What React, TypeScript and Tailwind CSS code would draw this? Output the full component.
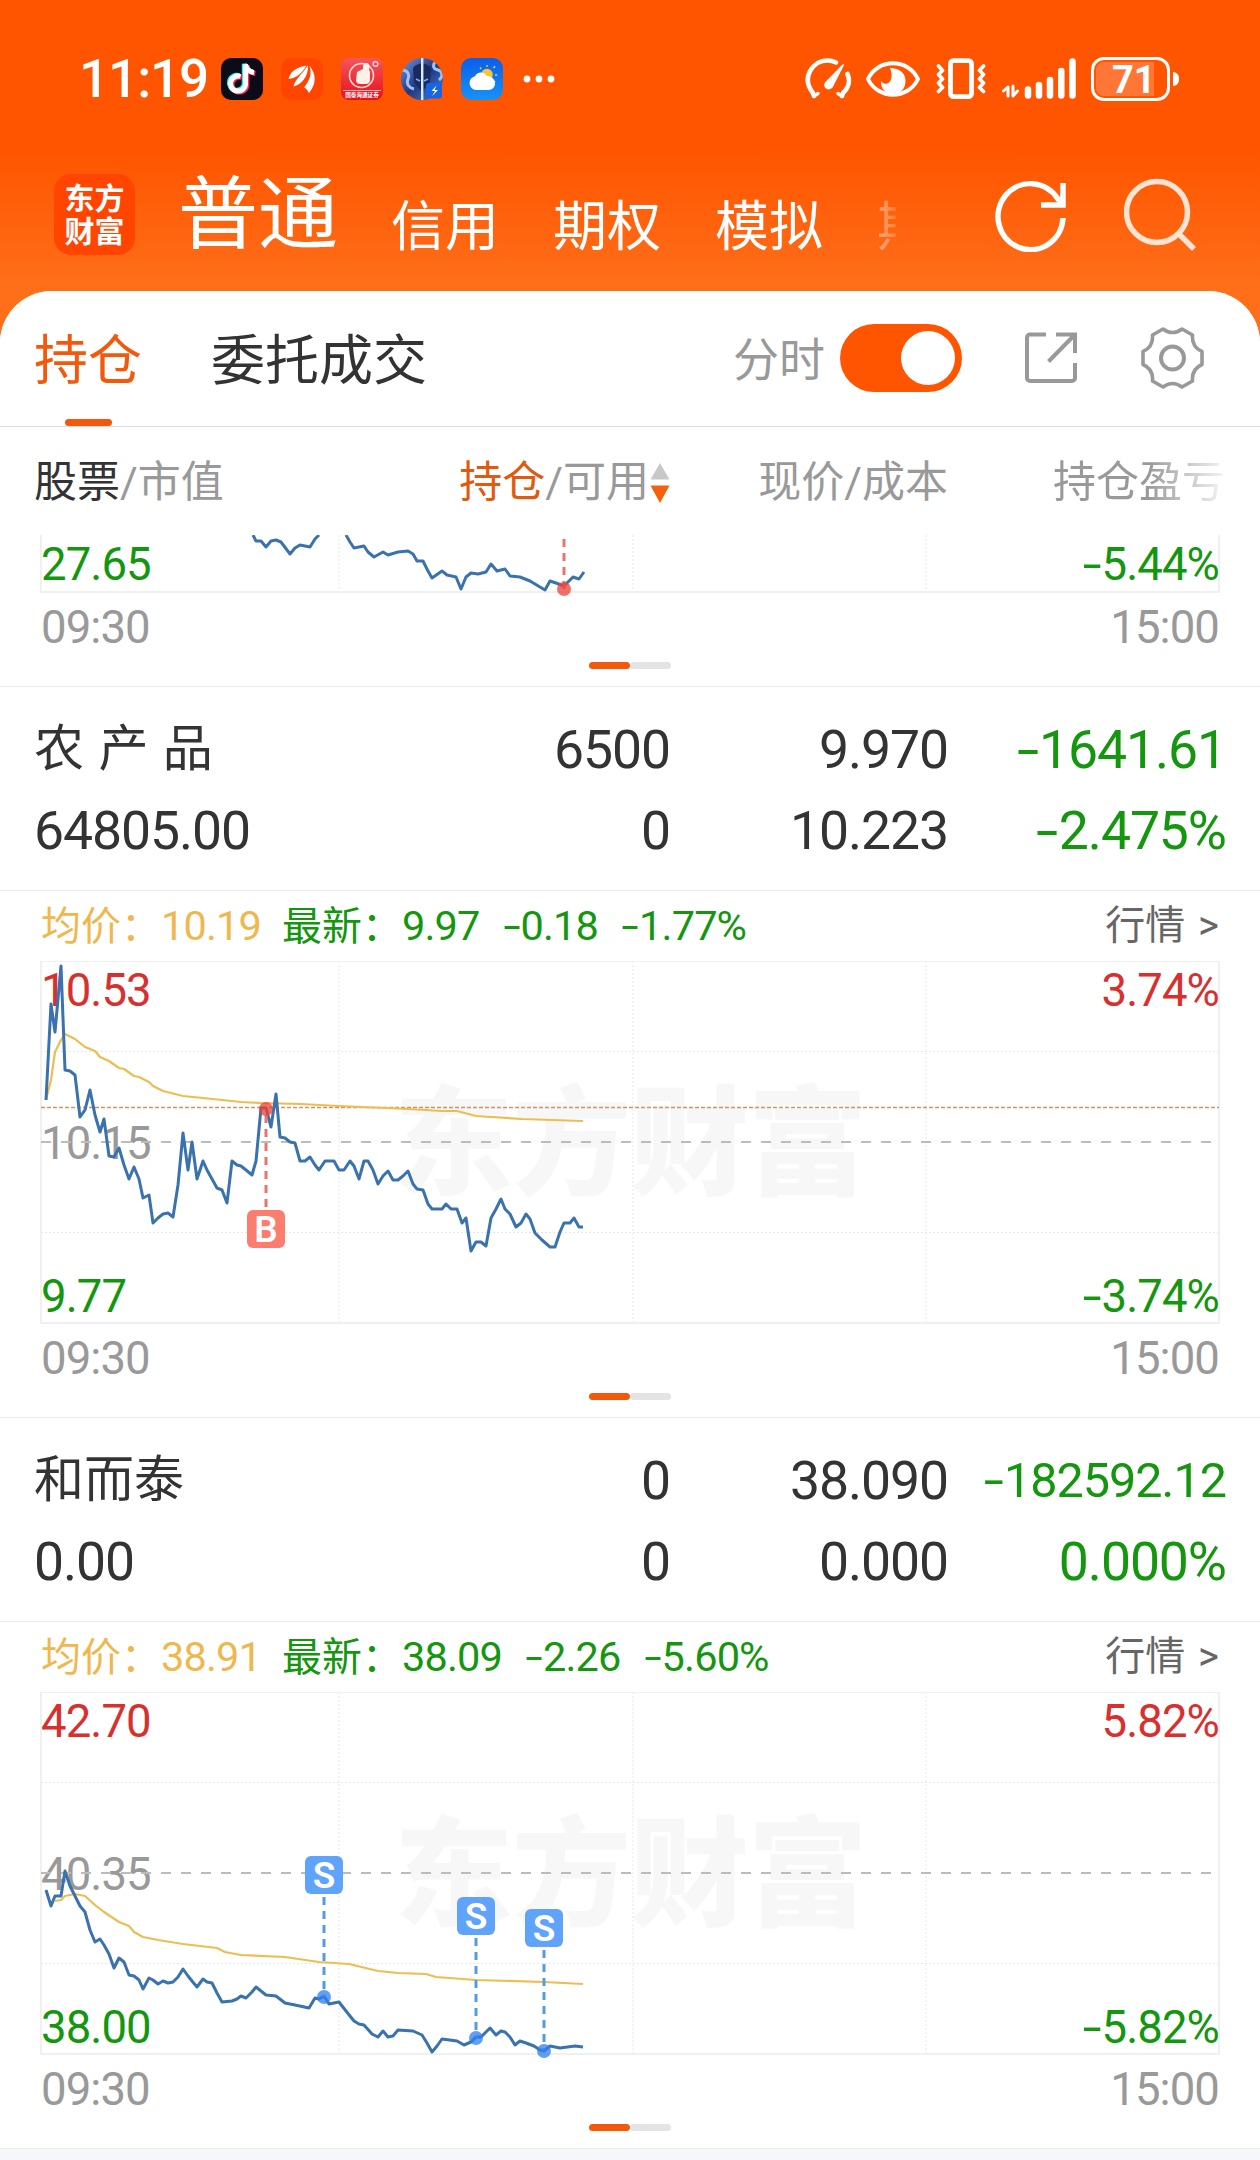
import { ReactNode } from "react";

type Marker = { x: number; dotY: number; boxY?: number; kind: "B" | "S" };

type Position = {
  name: string;
  value: string;
  amount: string;
  available: string;
  price: string;
  cost: string;
  profit: string;
  profitRate: string;
  average: string;
  latest: string;
  change: string;
  changeRate: string;
  high: string;
  middle: string;
  low: string;
  range: string;
  costLine?: number;
  priceLine: string;
  averageLine: string;
  markers: Marker[];
};

const positions: Position[] = [
  {
    name: "农 产 品",
    value: "64805.00",
    amount: "6500",
    available: "0",
    price: "9.970",
    cost: "10.223",
    profit: "-1641.61",
    profitRate: "-2.475%",
    average: "10.19",
    latest: "9.97",
    change: "-0.18",
    changeRate: "-1.77%",
    high: "10.53",
    middle: "10.15",
    low: "9.77",
    range: "3.74%",
    costLine: 146,
    priceLine:
      "5,139 10,43 14,71 20,5 24,109 29,110 34,114 39,156 44,149 49,129 54,154 59,171 63,158 68,195 73,196 78,187 83,204 88,218 93,206 98,218 102,237 108,234 112,262 117,257 122,253 127,252 132,256 137,224 142,172 147,209 151,181 156,218 162,200 166,209 171,218 176,227 181,229 186,242 191,200 196,204 200,205 205,209 211,214 215,200 220,147 225,147 230,166 235,133 239,176 244,177 249,181 254,182 259,200 264,200 269,196 274,204 278,209 284,200 293,200 298,209 303,209 309,200 313,205 318,218 323,200 327,200 332,209 337,223 342,215 347,210 352,219 357,219 362,215 367,210 372,223 376,228 382,229 387,243 391,248 401,248 405,243 410,248 416,248 421,262 425,257 430,290 435,281 440,281 445,285 450,257 455,248 460,238 464,248 469,253 475,266 480,262 485,253 489,258 494,272 501,279 509,286 514,286 519,271 523,262 529,262 533,257 538,266 542,266",
    averageLine:
      "5,139 10,119 14,91 20,79 24,73 34,78 44,86 54,90 59,96 68,100 78,107 83,108 93,115 98,116 108,121 112,125 122,130 142,135 162,137 181,139 200,141 220,142 259,143 298,145 367,148 401,150 416,150 435,155 481,158 542,160",
    markers: [{ x: 225, dotY: 148, boxY: 249, kind: "B" }],
  },
  {
    name: "和而泰",
    value: "0.00",
    amount: "0",
    available: "0",
    price: "38.090",
    cost: "0.000",
    profit: "-182592.12",
    profitRate: "0.000%",
    average: "38.91",
    latest: "38.09",
    change: "-2.26",
    changeRate: "-5.60%",
    high: "42.70",
    middle: "40.35",
    low: "38.00",
    range: "5.82%",
    priceLine:
      "5,198 10,214 14,204 20,204 24,179 29,194 34,204 39,214 44,220 49,238 54,250 59,247 63,253 68,262 73,276 78,266 83,270 88,283 93,284 98,288 102,297 108,286 112,288 117,292 122,289 127,291 132,290 137,285 142,277 147,284 151,289 156,295 162,287 166,290 171,291 176,301 181,310 191,309 196,307 200,304 205,306 211,300 215,295 220,299 225,303 235,304 244,311 254,313 268,316 274,306 278,307 283,304 288,312 298,310 305,319 313,329 318,332 323,333 331,342 337,345 342,339 347,345 352,344 357,338 372,339 381,343 386,351 391,360 396,354 401,347 416,349 423,353 430,350 435,345 440,345 449,336 455,343 460,339 464,340 469,345 474,353 479,349 485,351 493,354 499,358 503,359 509,354 519,356 534,354 542,355",
    averageLine:
      "14,209 20,208 24,204 34,202 44,204 54,213 63,220 78,230 88,234 93,240 102,245 117,248 142,252 176,256 184,260 200,263 244,265 278,270 308,272 337,279 357,281 385,282 395,285 435,288 503,290 542,292",
    markers: [
      { x: 283, dotY: 305, boxY: 164, kind: "S" },
      { x: 435, dotY: 346, boxY: 205, kind: "S" },
      { x: 503, dotY: 359, boxY: 217, kind: "S" },
    ],
  },
];

// numbers get a wider minus sign than the font gives
function Num({ value }: { value: string }) {
  const negative = value.startsWith("-");
  return (
    <span className="tracking-[-0.02em] whitespace-nowrap">
      {negative && <span className="inline-block scale-x-[1.5] px-[0.1em]">-</span>}
      {negative ? value.slice(1) : value}
    </span>
  );
}

function StatusBar() {
  return (
    <div className="flex h-[158px] items-start justify-between pt-[58px] pr-[81px] pl-[79px] text-white">
      <div className="flex h-[42px] items-center">
        <span className="w-[142px] text-[53px] leading-[42px] font-medium tracking-[-0.02em]">11:19</span>
        <div className="flex gap-[18px]">
          <svg width="42" height="42" viewBox="0 0 42 42">
            <rect width="42" height="42" rx="10" fill="#0c0b18" />
            <g fill="none" strokeWidth="5">
              <path d="M19.500 18.500a7.500 7.500 0 1 0 5 8V6.500c1 5 4 7.500 8.500 8" stroke="#25f4ee" transform="translate(-1.2 -.8)" />
              <path d="M19.500 18.500a7.500 7.500 0 1 0 5 8V6.500c1 5 4 7.500 8.500 8" stroke="#fe2c55" transform="translate(1.4 1)" />
              <path d="M19.500 18.500a7.500 7.500 0 1 0 5 8V6.500c1 5 4 7.500 8.500 8" stroke="#fff" />
            </g>
          </svg>
          <svg width="42" height="42" viewBox="0 0 42 42">
            <rect width="42" height="42" rx="10" fill="#ff4500" />
            <g fill="#fff">
              <path d="M7.500 21C16 20 21 15 25.500 7.500 17 9 9 13 7.500 21z" />
              <path d="M12.500 28.500c8-2 15-10 14.500-21C20 17 14 22 12.500 28.500z" />
              <path d="M23 29.500c6-7 8-14 5.500-22 7.500 10 6.500 19-.5 27.500-1.500-3-3-4.500-5-5.500z" />
            </g>
          </svg>
          <svg width="42" height="42" viewBox="0 0 42 42">
            <defs>
              <linearGradient id="broker" x1="0" y1="0" x2="0" y2="1">
                <stop offset="0" stopColor="#f5565c" />
                <stop offset="1" stopColor="#e60f1c" />
              </linearGradient>
            </defs>
            <rect width="42" height="42" rx="8" fill="url(#broker)" />
            <circle cx="20.5" cy="17.5" r="12" fill="none" stroke="#ffe1dc" strokeWidth="1.6" />
            <path d="M16 14l6-3c0-3 0-6 3-6s4 2 3 7l1 2v8c0 3-2 4-4 4h-6c-3 0-4-2-4-4z" fill="#fff0e8" />
            <circle cx="34.5" cy="6" r="2.4" fill="none" stroke="#ffe1dc" strokeWidth="1.2" />
            <path d="M2 32.5h38" stroke="#ffd4d0" strokeWidth=".8" />
            <text x="21" y="39" fontSize="5.6" fontWeight="700" textAnchor="middle" fill="#fff">国泰海通证券</text>
          </svg>
          <svg width="42" height="42" viewBox="0 0 42 42">
            <defs>
              <clipPath id="avatar">
                <circle cx="21" cy="21" r="21" />
              </clipPath>
              <linearGradient id="avatarBg" x1="0" y1="0" x2="1" y2="1">
                <stop offset="0" stopColor="#6f9be8" />
                <stop offset=".5" stopColor="#20377f" />
                <stop offset="1" stopColor="#4c86e0" />
              </linearGradient>
            </defs>
            <g clipPath="url(#avatar)">
              <rect width="42" height="42" fill="url(#avatarBg)" />
              <path d="M1 12c5 0 8 4 6 9s1 9 6 10M35 3c-4 4-3 8 2 9s5 7 1 10" fill="none" stroke="#9cc2f8" strokeWidth="3" />
              <path d="M12 10c4-6 14-6 18 0l-1 14-8 10-8-10z" fill="#1b2a5e" />
              <path d="M15 21l4 2M23 23l4-2" stroke="#7faaf0" strokeWidth="1.600" />
              <path d="M20 0h2.400v42H20z" fill="#d9ecff" />
            </g>
            <rect x="25" y="25" width="16" height="15.500" rx="3" fill="#1565e6" />
            <path d="M35.500 27.500l-5 5.500h3.500l-3 5 6-6h-3.500z" fill="#fff" />
          </svg>
          <svg width="42" height="42" viewBox="0 0 42 42">
            <defs>
              <linearGradient id="sky" x1="0" y1="0" x2="0" y2="1">
                <stop offset="0" stopColor="#0a5eea" />
                <stop offset="1" stopColor="#1593f8" />
              </linearGradient>
            </defs>
            <rect width="42" height="42" rx="10" fill="url(#sky)" />
            <circle cx="26" cy="16.5" r="5.8" fill="#fbc531" />
            <path d="M26 7V9M32.5 10l1.6-1.7M34 17h2.3M19 9.5l1.3 1.5M32.8 23l1.5 1" stroke="#fbc531" strokeWidth="1.4" />
            <path d="M15 32a7 7 0 0 1-1-13.8c2-4.5 9-5 11.500-.4C29 18 34 20 34 25.500 34 29 31.500 32 27.500 32z" fill="#fff" />
          </svg>
        </div>
        <svg width="32" height="8" viewBox="0 0 32 8" className="ml-[20px]" fill="#fff">
          <circle cx="4" cy="4" r="3.400" />
          <circle cx="16" cy="4" r="3.400" />
          <circle cx="28" cy="4" r="3.400" />
        </svg>
      </div>

      <div className="flex h-[42px] items-center">
        <svg width="48" height="42" viewBox="0 0 48 42" fill="none" stroke="#fff" strokeWidth="4.600" strokeLinecap="round">
          <path d="M10 38l-1-3C-3 20 8 2.500 24 2.500c3 0 5.500.8 8 2" />
          <path d="M43.500 16c3 7 1 14-4.500 19l-1 3" />
          <path d="M10 38l4-2.500M38 38l-4-2.500" strokeWidth="3.500" />
          <path d="M39.500 6.500L28 29c-3.500 3.500-8.500.5-6.500-4z" fill="#fff" strokeWidth="1.500" />
        </svg>
        <svg width="54" height="38" viewBox="0 0 54 38" className="ml-[14px]" fill="none" stroke="#fff" strokeWidth="4">
          <path d="M2 19C12-2 42-2 52 19 42 40 12 40 2 19z" strokeLinejoin="round" />
          <path d="M24 8c9 0 15.500 5 15.500 13 0 8-5.500 13-12.500 13S14.500 29 15 21c2 3 6 4 8.500 1 3-3.500 2.500-9 .5-14z" fill="#fff" stroke="none" />
        </svg>
        <svg width="50" height="42" viewBox="0 0 50 42" className="ml-[16px]" fill="none" stroke="#fff" strokeWidth="4.800" strokeLinecap="round" strokeLinejoin="round">
          <rect x="14.500" y="2.600" width="21" height="36" rx="3" />
          <path d="M2.500 8l4 4.500-4 4 4 4.500-4 4 4 4.500-4 4M47.500 8l-4 4.500 4 4-4 4.500 4 4-4 4.500 4 4" strokeWidth="3.700" />
        </svg>
        <svg width="74" height="42" viewBox="0 0 74 42" className="ml-[16px]" fill="none" stroke="#fff" strokeLinecap="round">
          <path d="M1.500 33L6 29v9M11 28v10l4.500-5" strokeWidth="3" strokeLinejoin="round" />
          <path d="M26 31.500v6M37 27v10.500M48 22v15.500M59.300 13v24.500M70.500 3.500v34" strokeWidth="6.500" />
        </svg>
        <div className="ml-[15px] flex h-[44px] w-[79px] rounded-[13px] border-[3.500px] border-white p-[2px]">
          <span className="h-full w-[58px] rounded-l-[8px] bg-[#ff7636] pl-[16px] text-[38px] leading-[37px] font-bold">71</span>
        </div>
        <span className="ml-[3px] h-[14px] w-[6px] rounded-r-full bg-white" />
      </div>
    </div>
  );
}

function AccountTabs() {
  return (
    <div className="flex h-[133px] items-start pl-[54px] text-white">
      <div className="mt-[16px] flex h-[81px] w-[81px] flex-col items-center justify-center rounded-[17px] bg-[#ff4500] text-[30px] leading-[33px] font-bold">
        <span>东方</span>
        <span>财富</span>
      </div>
      <div className="ml-[43px] flex h-[112px] w-[774px] items-baseline overflow-hidden whitespace-nowrap [mask-image:linear-gradient(90deg,#000_660px,#0006_703px,#0003_717px,transparent_718px)]">
        <span className="shrink-0 text-[80px] leading-[114px]">普通</span>
        <div className="ml-[53px] flex shrink-0 translate-y-[4px] gap-[54px] text-[54px]">
          <span>信用</span>
          <span>期权</span>
          <span>模拟</span>
          <span>期货</span>
        </div>
      </div>
      <svg width="71" height="73" viewBox="0 0 71 73" className="mt-[21px] ml-[43px]" fill="none" stroke="#fff" strokeWidth="5.500">
        <path d="M68 39A32.500 33 0 1 1 63 20L68 25" />
        <path d="M68 4v22H46" />
      </svg>
      <svg width="72" height="73" viewBox="0 0 72 73" className="mt-[20px] ml-[58px]" fill="none" stroke="#ffe3d3" strokeWidth="5.500">
        <circle cx="33" cy="34" r="30.500" />
        <path d="M54 55l16 16" />
      </svg>
    </div>
  );
}

function Toolbar() {
  return (
    <div className="flex h-[136px] items-start border-b border-[#dedede] pl-[34px]">
      <div className="flex h-[135px] flex-col items-center justify-end text-[54px] text-[#f2590c]">
        <span className="mb-[30px] h-[54px] leading-[54px]">持仓</span>
        <span className="h-[7px] w-[47px] rounded-full bg-[#f2590c]" />
      </div>
      <span className="mt-[44px] ml-[69px] text-[54px] leading-[54px] text-[#333]">委托成交</span>
      <span className="mt-[44px] ml-[306px] text-[46px] leading-[50px] text-[#999]">分时</span>
      <div className="mt-[33px] ml-[15px] flex h-[68px] w-[122px] items-center justify-end rounded-full bg-[#ff5500] pr-[7px]">
        <span className="h-[54px] w-[54px] rounded-full bg-white" />
      </div>
      <svg width="52" height="52" viewBox="0 0 52 52" className="mt-[41px] ml-[63px]" fill="none" stroke="#999" strokeWidth="4">
        <path d="M21 2.500H5a3 3 0 0 0-3 3V46a3 3 0 0 0 3 3h42a3 3 0 0 0 3-3V31" />
        <path d="M31 2.500h19V21M50 2.500L23.500 29.500" />
      </svg>
      <svg width="63" height="62" viewBox="0 0 63 62" className="mt-[36px] ml-[64px]" fill="none" stroke="#999" strokeWidth="3.600" strokeLinejoin="round">
        <path d="M22 2q9.500 7 19 0l10.500 6q-1 12 9.500 16.500v13q-10.500 4.500-9.500 16.500L41 60q-9.500-7-19 0l-10.500-6q1-12-9.500-16.500v-13Q12.500 20 11.500 8z" />
        <circle cx="31.500" cy="31" r="11.500" strokeWidth="4" />
      </svg>
    </div>
  );
}

function ColumnHeader() {
  return (
    <div className="grid h-[108px] grid-cols-[303px_333px_278px_277px] items-center pt-[3px] pl-[34px] text-[43px] whitespace-nowrap text-[#999]">
      <div>
        <span className="text-[#333]">股票</span>/市值
      </div>
      <div className="flex items-center justify-end">
        <span>
          <span className="text-[#e05a10]">持仓</span>/可用
        </span>
        <svg width="20" height="42" viewBox="0 0 20 42" className="ml-px">
          <path d="M10 1l9.500 16.500H.5z" fill="#c8c8c8" />
          <path d="M10 41L.5 23.500h19z" fill="#f5600f" />
        </svg>
      </div>
      <div className="text-right">现价/成本</div>
      <div className="ml-[105px] [mask-image:linear-gradient(90deg,#000_95px,transparent_180px)]">持仓盈亏</div>
    </div>
  );
}

function TradeMarker({ x, dotY, boxY, kind }: Marker) {
  const buy = kind === "B";
  const color = buy ? "#e8756a" : "#559be2";
  return (
    <g>
      <path
        d={`M${x} ${boxY === undefined ? 4 : boxY > dotY ? boxY - 3 : boxY + 41}V${dotY}`}
        stroke={color}
        strokeWidth="3"
        strokeDasharray="8 6"
      />
      <circle cx={x} cy={dotY} r="7" fill={buy ? "#ee4035" : "#2d7ff0"} opacity=".75" />
      {boxY !== undefined && (
        <>
          <rect x={x - 19} y={boxY} width="38" height="38" rx="6" fill={buy ? "#fa7d6f" : "#60a3fb"} />
          <text x={x} y={boxY + 32} fontSize="37" fontWeight="600" textAnchor="middle" fill="#fff">
            {kind}
          </text>
        </>
      )}
    </g>
  );
}

function Lines({ price, average }: { price: string; average?: string }) {
  return (
    <g fill="none" strokeLinejoin="round">
      {average && <polyline points={average} stroke="#edbd52" strokeWidth="2.200" />}
      <polyline points={price} stroke="#3a72ae" strokeWidth="3" />
    </g>
  );
}

function TimeAxis() {
  return (
    <div className="flex h-[70px] items-center justify-between pt-[2px] text-[45.500px] text-[#999]">
      <Num value="09:30" />
      <Num value="15:00" />
    </div>
  );
}

function Pager() {
  return (
    <div className="flex justify-center">
      <span className="h-[7px] w-[41px] rounded-full bg-[#f2590c]" />
      <span className="h-[7px] w-[41px] rounded-full bg-[#e4e4e4]" />
    </div>
  );
}

function Chart({ item }: { item: Position }) {
  return (
    <div className="relative h-[362px] text-[45.500px] leading-[60px]">
      <div className="flex h-[366px] flex-col justify-between">
        <div className="flex justify-between text-[#d8302f]">
          <Num value={item.high} />
          <Num value={item.range} />
        </div>
        <div className="text-[#999]">
          <Num value={item.middle} />
        </div>
        <div className="flex justify-between text-[#14960f]">
          <Num value={item.low} />
          <Num value={"-" + item.range} />
        </div>
      </div>
      <svg width="1180" height="372" viewBox="-1 0 1180 372" className="absolute top-0 left-[-1px]">
        <text x="353" y="225" fontSize="119" fontWeight="900" letterSpacing="-1" fill="#000" opacity=".026">
          东方财富
        </text>
        <path d="M0 90.500H1178M0 271.500H1178M298 0V362M592 0V362M885 0V362" stroke="#e6e6e6" strokeWidth="1" strokeDasharray="2 2" />
        <rect x="0" y="0" width="1178" height="362" fill="none" stroke="#f0f0f0" strokeWidth="2" />
        <path d="M0 181H1176" stroke="#bcbcbc" strokeWidth="2" strokeDasharray="10 10" />
        {item.costLine && <path d={`M0 ${item.costLine + 0.5}H1178`} stroke="#cc9465" strokeWidth="1.500" strokeDasharray="4 2" />}
        <Lines price={item.priceLine} average={item.averageLine} />
        {item.markers.map((marker) => (
          <TradeMarker key={marker.x} {...marker} />
        ))}
      </svg>
    </div>
  );
}

function Cell({ children, className }: { children: ReactNode; className?: string }) {
  return <div className={"text-right " + (className || "")}>{children}</div>;
}

function PositionBlock({ item }: { item: Position }) {
  return (
    <section className="h-[731px] border-t border-[#eaeaea]">
      <div className="grid h-[204px] grid-cols-[303px_333px_278px_278px] content-start border-b border-[#eaeaea] pt-[22px] pl-[34px] text-[53.500px] leading-[81px] text-[#333]">
        <div className="text-[50px] [word-spacing:2px]">{item.name}</div>
        <Cell><Num value={item.amount} /></Cell>
        <Cell><Num value={item.price} /></Cell>
        <Cell className={item.profit.length > 9 ? "text-[48.500px] text-[#14960f]" : "text-[#14960f]"}>
          <Num value={item.profit} />
        </Cell>
        <div><Num value={item.value} /></div>
        <Cell><Num value={item.available} /></Cell>
        <Cell><Num value={item.cost} /></Cell>
        <Cell className="text-[#14960f]"><Num value={item.profitRate} /></Cell>
      </div>
      <div className="px-[41px]">
        <div className="flex h-[70px] items-center text-[41.500px] text-[#14960f]">
          <span className="w-[241px] text-[#efb84e]"><span className="text-[40px]">均价：</span><Num value={item.average} /></span>
          <span><span className="text-[40px]">最新：</span><Num value={item.latest} /></span>
          <span className="ml-[22px]"><Num value={item.change} /></span>
          <span className="ml-[22px]"><Num value={item.changeRate} /></span>
          <span className="ml-auto text-[40px] text-[#666] [word-spacing:3px]">行情 &gt;</span>
        </div>
        <Chart item={item} />
        <TimeAxis />
      </div>
      <Pager />
    </section>
  );
}

// the block above the fold, only the bottom of its chart is visible
function ScrolledBlock() {
  return (
    <section className="h-[151px]">
      <div className="px-[41px]">
        <div className="relative h-[57px] text-[45.500px] leading-[60px]">
          <div className="flex justify-between text-[#14960f]">
            <Num value="27.65" />
            <Num value="-5.44%" />
          </div>
          <svg width="1180" height="70" viewBox="-1 0 1180 70" className="absolute top-0 left-[-1px]">
            <path d="M298 0V57M592 0V57M885 0V57" stroke="#e6e6e6" strokeWidth="1" strokeDasharray="2 2" />
            <path d="M0 0V57H1178V0" fill="none" stroke="#f0f0f0" strokeWidth="2" />
            <Lines price="212,0 215,6 220,6 225,12 230,6 235,5 240,7 249,19 254,13 259,10 269,12 274,4 278,0" />
            <Lines price="305,0 309,7 313,13 323,11 327,17 333,22 342,17 347,20 357,17 367,16 372,19 376,26 382,26 387,36 391,43 401,36 406,40 415,42 420,54 425,42 430,38 437,39 445,37 450,29 456,36 464,34 469,41 479,42 489,46 504,55 509,46 515,48 523,51 532,42 538,44 543,37" />
            <TradeMarker x={523} dotY={54} kind="B" />
          </svg>
        </div>
        <TimeAxis />
      </div>
      <Pager />
    </section>
  );
}

export default function App() {
  return (
    <div className="h-[2160px] w-[1260px] overflow-hidden bg-[linear-gradient(180deg,#ff5500_0px,#ff5500_150px,#ff6f1a_290px,#ff6f1a_400px)] [font-family:Roboto,'Noto_Sans_CJK_SC',sans-serif]">
      <StatusBar />
      <AccountTabs />
      <main className="h-[1869px] rounded-t-[52px] bg-[#f6f7fa]">
        <div className="rounded-t-[52px] border-b border-[#eaeaea] bg-white">
          <Toolbar />
          <ColumnHeader />
          <ScrolledBlock />
          {positions.map((item) => (
            <PositionBlock key={item.name} item={item} />
          ))}
        </div>
      </main>
    </div>
  );
}
